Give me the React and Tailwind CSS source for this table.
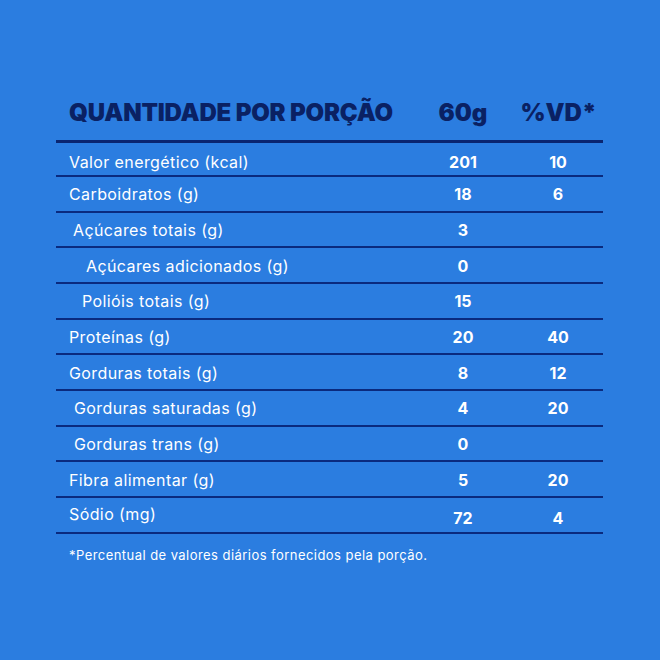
import React from "react";

const rows = [
  { label: "Valor energético (kcal)", v: "201", vd: "10", ind: "pl-[13px]", first: true },
  { label: "Carboidratos (g)", v: "18", vd: "6", ind: "pl-[13px]" },
  { label: "Açúcares totais (g)", v: "3", vd: "", ind: "pl-[17px]" },
  { label: "Açúcares adicionados (g)", v: "0", vd: "", ind: "pl-[30px]" },
  { label: "Polióis totais (g)", v: "15", vd: "", ind: "pl-[26px]" },
  { label: "Proteínas (g)", v: "20", vd: "40", ind: "pl-[13px]" },
  { label: "Gorduras totais (g)", v: "8", vd: "12", ind: "pl-[13px]" },
  { label: "Gorduras saturadas (g)", v: "4", vd: "20", ind: "pl-[18px]" },
  { label: "Gorduras trans (g)", v: "0", vd: "", ind: "pl-[18px]" },
  { label: "Fibra alimentar (g)", v: "5", vd: "20", ind: "pl-[13px]" },
  { label: "Sódio (mg)", v: "72", vd: "4", ind: "pl-[13px]", last: true },
];

export default function App() {
  return (
    <div
      className="w-[660px] h-[660px] bg-[#2b7de0] pt-[97px] pl-[56px] overflow-hidden"
      style={{ fontFamily: "Inter, 'Liberation Sans', sans-serif" }}
    >
      <div className="w-[547px]">
        <div className="grid grid-cols-[357px_100px_90px] items-end h-[46px] border-b-[3px] border-[#0a2570] text-[#0a2163] font-black text-[24px] leading-[29px] pb-[13px]">
          <div className="pl-[13px] tracking-[-0.2px]">QUANTIDADE POR PORÇÃO</div>
          <div className="text-center">60g</div>
          <div className="text-center pl-[1px]">%VD*</div>
        </div>
        {rows.map((r) => (
          <div
            key={r.label}
            className={`grid grid-cols-[357px_100px_90px] items-center ${r.first ? "h-[34px] pt-[5px]" : "h-[35.67px] pt-[1px]"} border-b-2 border-[#0a2a7e] text-white text-[16px] leading-[20px] tracking-[0.4px]`}
          >
            <div className={`${r.ind} ${r.last ? "-translate-y-[1px]" : ""}`}>{r.label}</div>
            <div className={`text-center font-bold tracking-[0px] ${r.last ? "translate-y-[3px]" : ""}`}>{r.v}</div>
            <div className={`text-center font-bold tracking-[0px] ${r.last ? "translate-y-[3px]" : ""}`}>{r.vd}</div>
          </div>
        ))}
        <div className="pl-[13px] mt-[12px] text-white text-[13px] leading-[18px] tracking-[0.45px]">
          *Percentual de valores diários fornecidos pela porção.
        </div>
      </div>
    </div>
  );
}
